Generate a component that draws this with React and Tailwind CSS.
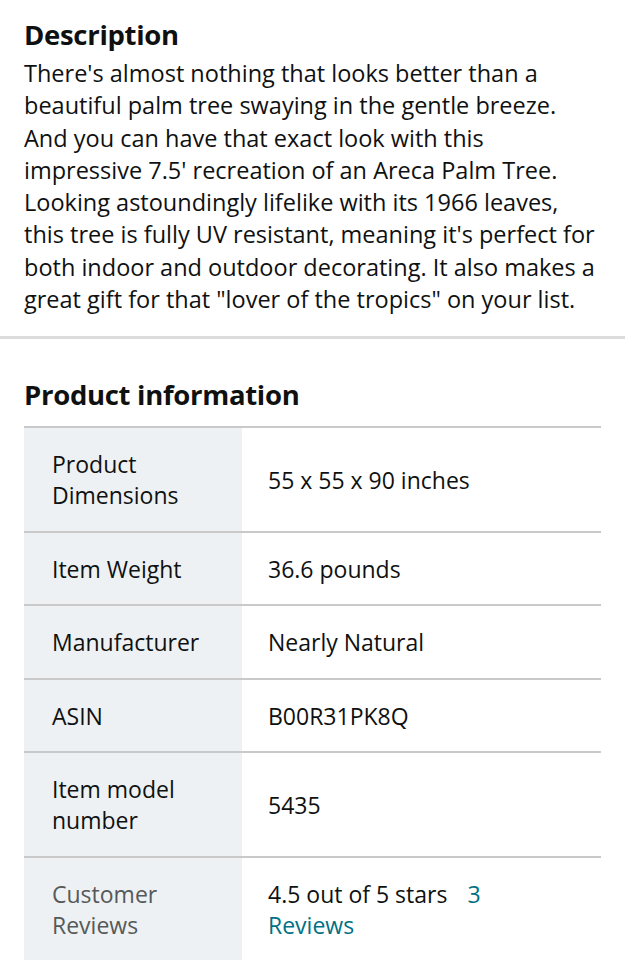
const rows = [
  { label: ["Product", "Dimensions"], value: "55 x 55 x 90 inches" },
  { label: ["Item Weight"], value: "36.6 pounds" },
  { label: ["Manufacturer"], value: "Nearly Natural" },
  { label: ["ASIN"], value: "B00R31PK8Q" },
  { label: ["Item model", "number"], value: "5435" },
];

const desc = [
  "There's almost nothing that looks better than a",
  "beautiful palm tree swaying in the gentle breeze.",
  "And you can have that exact look with this",
  "impressive 7.5' recreation of an Areca Palm Tree.",
  "Looking astoundingly lifelike with its 1966 leaves,",
  "this tree is fully UV resistant, meaning it's perfect for",
  "both indoor and outdoor decorating. It also makes a",
  'great gift for that "lover of the tropics" on your list.',
];

export default function App() {
  return (
    <div
      className="min-h-screen bg-white text-[#0f1111]"
      style={{ fontFamily: '"Open Sans", "Noto Sans", sans-serif' }}
    >
      <div className="px-6 pt-[15px] pb-[21px]">
        <h2 className="text-[27.5px] font-bold leading-[40px] tracking-[-0.3px] mb-[2px]">Description</h2>
        <p className="text-[23.5px] leading-[32.3px]">
          {desc.map((l) => (
            <span key={l} className="block whitespace-nowrap">
              {l}
            </span>
          ))}
        </p>
      </div>

      <div className="h-[3px] bg-[#dcdcdc]" />

      <div className="px-6 pt-[38px]">
        <h2 className="text-[27.5px] font-bold leading-[36px] tracking-[-0.3px] mb-[13px]">
          Product information
        </h2>

        <div className="w-[577px] text-[23px] leading-[31px]">
          {rows.map((r) => (
            <div key={r.value} className="flex border-t-2 border-[#c9c9c9]">
              <div className="w-[218px] shrink-0 bg-[#eef1f3] pt-[21px] pb-[19.5px] pl-7 pr-2">
                {r.label.map((l) => (
                  <div key={l}>{l}</div>
                ))}
              </div>
              <div className="flex flex-1 items-center pt-[21px] pb-[19.5px] pl-[26px]">{r.value}</div>
            </div>
          ))}
          <div className="flex border-t-2 border-[#c9c9c9]">
            <div className="w-[218px] shrink-0 bg-[#eef1f3] pt-[21px] pl-7 pr-2 pb-10 text-[#565959]">
              <div>Customer</div>
              <div>Reviews</div>
            </div>
            <div className="flex-1 pt-[21px] pb-5 pl-[26px]">
              <div>
                4.5 out of 5 stars
                <span className="text-[#007185] ml-[20px]">3</span>
              </div>
              <div className="text-[#007185]">Reviews</div>
            </div>
          </div>
        </div>
      </div>
    </div>
  );
}
